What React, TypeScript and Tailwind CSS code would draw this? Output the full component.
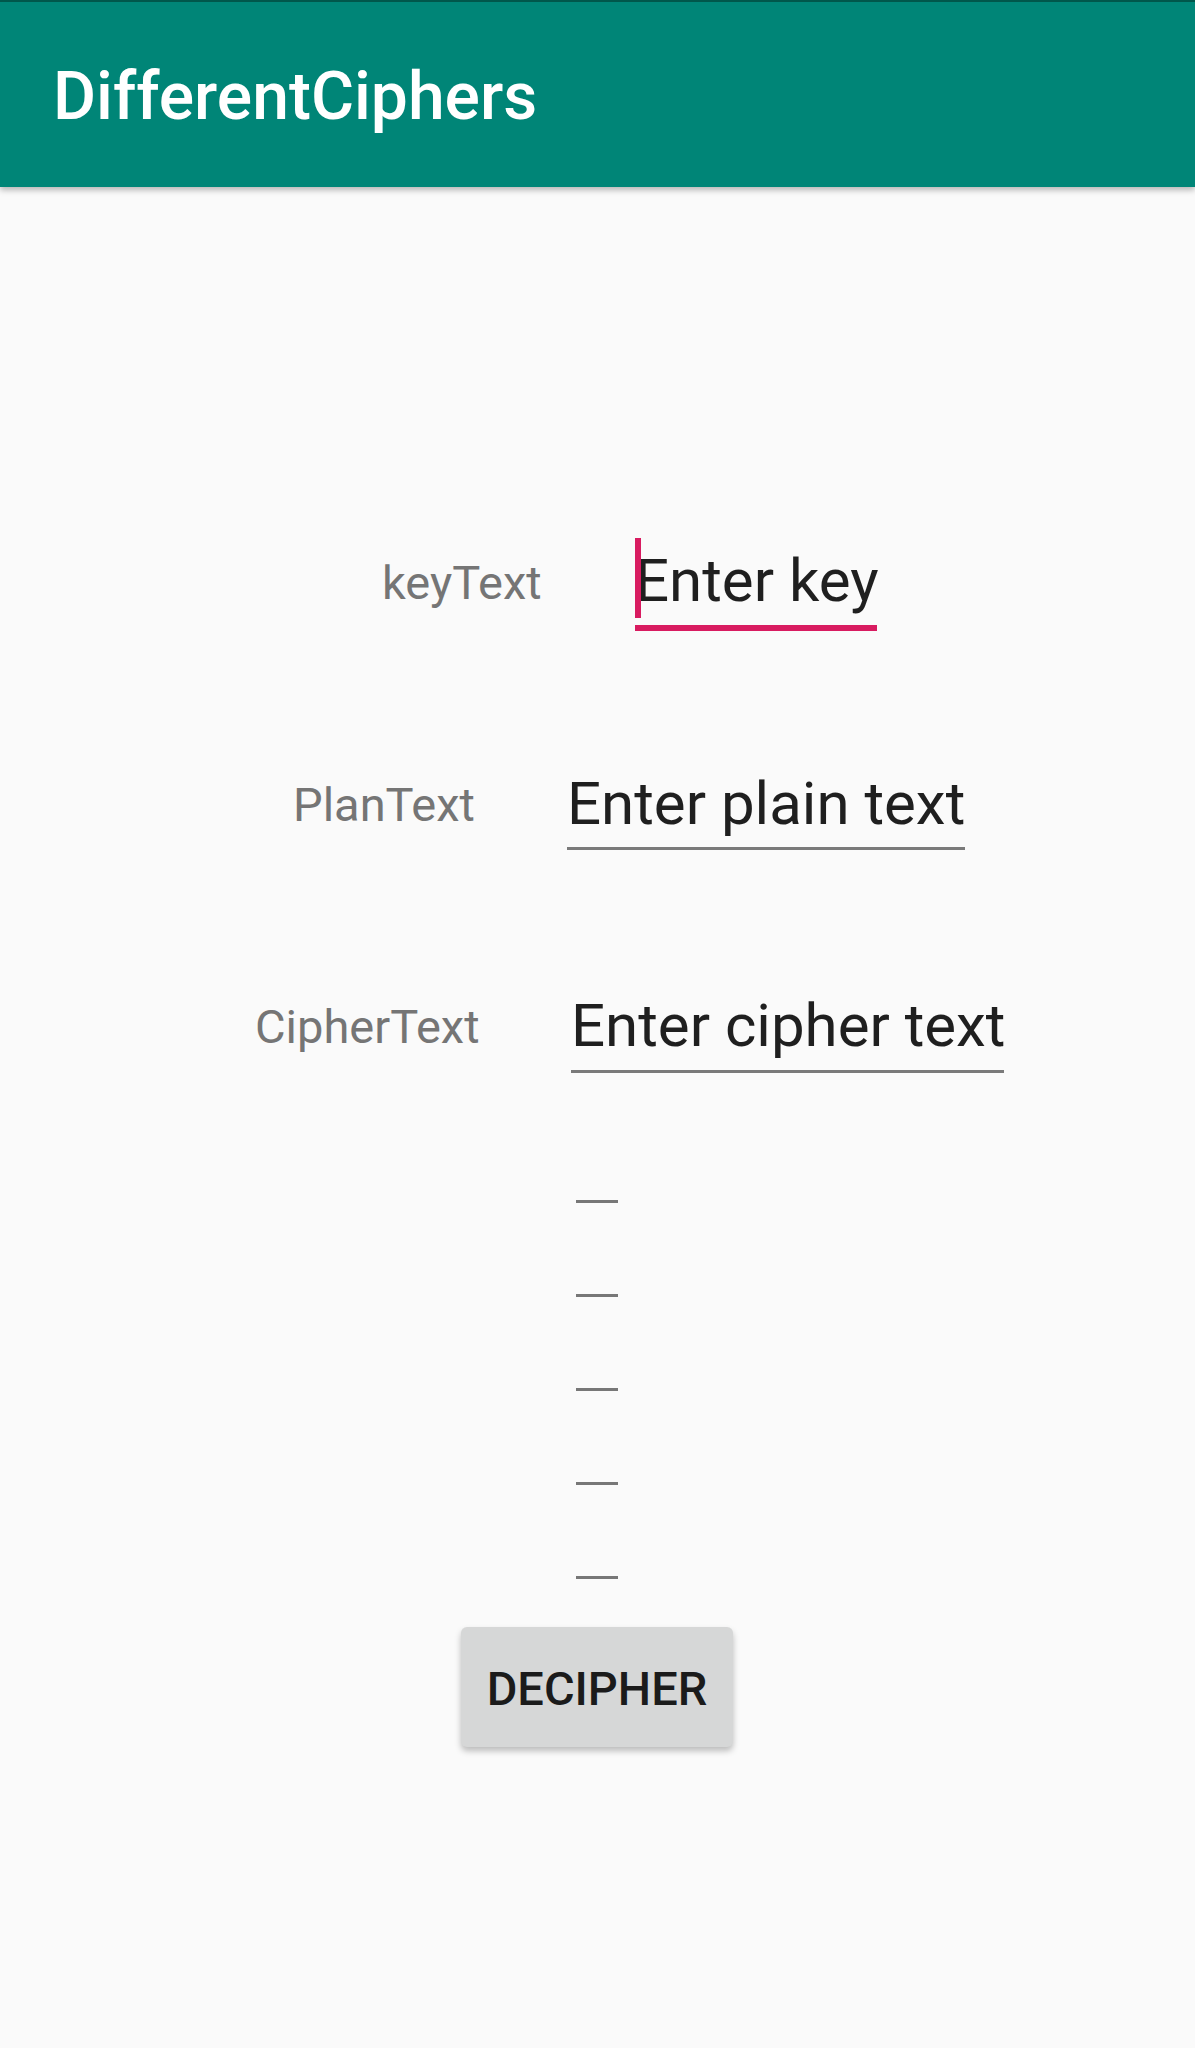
import React from "react";

const font = "font-['Roboto','Noto_Sans',sans-serif]";

export default function App() {
  return (
    <div className={`min-h-[2048px] bg-[#fafafa] ${font}`}>
      <header className="relative z-10 h-[187px] bg-[#008577] border-t-[2px] border-[#00574b] shadow-[0_3px_6px_rgba(0,0,0,0.28)] flex items-center pl-[53px] pt-[5px]">
        <h1 className="text-[66px] font-medium text-white leading-none">DifferentCiphers</h1>
      </header>

      <main className="flex flex-col">
        {/* Row 1 */}
        <div className="flex items-start mt-[364px]">
          <div className="ml-[382px] w-[253px] mt-[8px] text-[47px] leading-none text-[#757575]">keyText</div>
          <div className="relative w-[242px] pb-[14px] border-b-[6px] border-[#d81b60]">
            <span className="absolute left-0 top-[-13px] w-[6px] h-[80px] bg-[#d81b60]" />
            <div className="text-[60px] leading-none text-[#1f1f1f] whitespace-nowrap">Enter key</div>
          </div>
        </div>

        {/* Row 2 */}
        <div className="flex items-start mt-[143px]">
          <div className="ml-[293px] w-[274px] mt-[7px] text-[47px] leading-none text-[#757575]">PlanText</div>
          <div className="w-[398px] pb-[13px] border-b-[3px] border-[#7a7a7a]">
            <div className="text-[60px] leading-none text-[#1f1f1f] whitespace-nowrap">Enter plain text</div>
          </div>
        </div>

        {/* Row 3 */}
        <div className="flex items-start mt-[146px]">
          <div className="ml-[255px] w-[316px] mt-[7px] text-[47px] leading-none text-[#757575]">CipherText</div>
          <div className="w-[433px] pb-[14px] border-b-[3px] border-[#7a7a7a]">
            <div className="text-[60px] leading-none text-[#1f1f1f] whitespace-nowrap">Enter cipher text</div>
          </div>
        </div>

        {/* Empty fields */}
        <div className="flex flex-col ml-[576px] mt-[127px] gap-[91px]">
          <div className="w-[42px] h-[3px] bg-[#777777]" />
          <div className="w-[42px] h-[3px] bg-[#777777]" />
          <div className="w-[42px] h-[3px] bg-[#777777]" />
          <div className="w-[42px] h-[3px] bg-[#777777]" />
          <div className="w-[42px] h-[3px] bg-[#777777]" />
        </div>

        <button className="ml-[461px] mt-[48px] w-[272px] h-[120px] rounded-[6px] bg-[#d6d7d7] shadow-[0_4px_6px_rgba(0,0,0,0.25)] flex items-center justify-center pt-[2px] text-[47px] font-medium leading-none text-[#1b1b1b]">
          DECIPHER
        </button>
      </main>
    </div>
  );
}
